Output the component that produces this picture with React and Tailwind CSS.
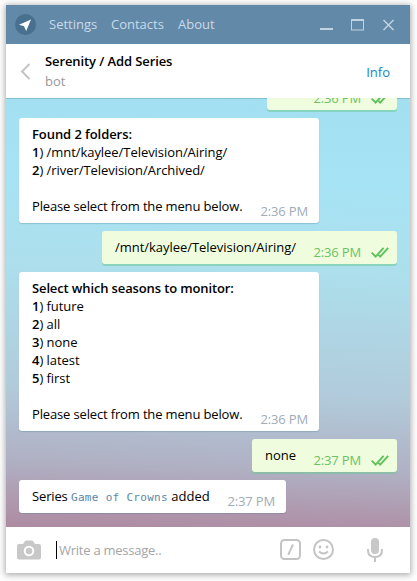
import React from 'react';

function Checks() {
  return (
    <svg width="18" height="11" viewBox="0 0 18 11" fill="none" stroke="#5fc15b" strokeWidth="1.9" className="ml-[10px] shrink-0">
      <path d="M0.6 5.6 L4.6 9.6 L12.6 0.8" />
      <path d="M7.4 7.8 L9.2 9.6 L17.2 0.8" />
    </svg>
  );
}

function Bubble({ out, time, width, children }) {
  return (
    <div
      className={
        'flex shrink-0 justify-between rounded-[3px] pt-[7px] pb-[8px] pl-[13px] text-[13px] leading-[18px] whitespace-nowrap text-black ' +
        (out
          ? 'self-end bg-[#effdde] pr-[8px] shadow-[0_2px_0_rgba(112,200,150,0.55)] '
          : 'self-start bg-white pr-[11px] shadow-[0_1px_1px_rgba(70,120,150,0.3)] ') +
        width
      }
    >
      <div>{children}</div>
      <div className={'flex h-[18px] translate-y-[5px] items-center self-end ' + (out ? 'text-[#6cc264]' : 'text-[#a0acb6]')}>
        <span className="tracking-[-0.15px]">{time}</span>
        {out && <Checks />}
      </div>
    </div>
  );
}

function Option({ n, children }) {
  return (
    <div className="tracking-[-0.05px]">
      <span className="font-semibold">{n}</span>) {children}
    </div>
  );
}

export default function App() {
  return (
    <div className="h-[581px] w-[417px] overflow-hidden bg-[#fdfdfd] pt-[5px] pl-[6px] font-['Open_Sans',sans-serif] text-[13px]">
      <div className="flex h-[568px] w-[404px] flex-col bg-white shadow-[0_1px_6px_1px_rgba(0,0,0,0.32)]">
        <div className="flex h-[39px] shrink-0 items-center bg-[#6389a8] pl-[9px] text-[#c9dae8]">
          <svg width="21" height="21" viewBox="0 0 21 21" className="shrink-0">
            <circle cx="10.5" cy="10.5" r="10.5" fill="#48708f" />
            <path d="M16 5.5 L4 10.7 L9 12.2 L11.2 17 Z" fill="#fff" />
          </svg>
          <span className="ml-[13px] w-[62px]">Settings</span>
          <span className="w-[67px]">Contacts</span>
          <span>About</span>
          <svg width="75" height="14" viewBox="0 0 75 14" fill="none" stroke="#c0d3e2" className="mr-[15px] ml-auto">
            <path d="M0 11 H13" strokeWidth="2" />
            <rect x="31.5" y="2" width="12" height="10" />
            <path d="M31 2 H44" strokeWidth="2" />
            <path d="M63.5 2 L73.5 12 M73.5 2 L63.5 12" strokeWidth="1.5" />
          </svg>
        </div>

        <div className="flex h-[54px] shrink-0 items-center bg-white pr-[20px] pl-[14px]">
          <svg width="11" height="17" viewBox="0 0 11 17" fill="none" stroke="#c4c4c4" strokeWidth="2">
            <path d="M9.5 1 L2 8.5 L9.5 16" />
          </svg>
          <div className="ml-[14px] leading-[20px]">
            <div className="font-semibold tracking-[-0.1px] text-black">Serenity / Add Series</div>
            <div className="text-[#999]">bot</div>
          </div>
          <span className="mt-[3px] ml-auto text-[#1485c2]">Info</span>
        </div>

        <div className="flex h-[429px] shrink-0 flex-col justify-end gap-[8px] overflow-hidden bg-[linear-gradient(182deg,#a2e0f1_0%,#a6e3f4_20%,#addfec_40%,#b1cbdb_68%,#b0b0c3_85%,#ae8aa1_100%)] px-[13px] pb-[14px] shadow-[inset_0_1px_0_rgba(70,130,150,0.35)]">
          <Bubble out time="2:36 PM" width="h-[33px] w-[130px]" />
          <Bubble time="2:36 PM" width="w-[300px]">
            <div className="font-semibold tracking-[-0.07px]">Found 2 folders:</div>
            <Option n="1">/mnt/kaylee/Television/Airing/</Option>
            <Option n="2">/river/Television/Archived/</Option>
            <br />
            <div className="tracking-[-0.15px]">Please select from the menu below.</div>
          </Bubble>
          <Bubble out time="2:36 PM" width="w-[295px]">
            <span className="tracking-[-0.04px]">/mnt/kaylee/Television/Airing/</span>
          </Bubble>
          <Bubble time="2:36 PM" width="w-[300px]">
            <div className="font-semibold tracking-[-0.13px]">Select which seasons to monitor:</div>
            <Option n="1">future</Option>
            <Option n="2">all</Option>
            <Option n="3">none</Option>
            <Option n="4">latest</Option>
            <Option n="5">first</Option>
            <br />
            <div className="tracking-[-0.15px]">Please select from the menu below.</div>
          </Bubble>
          <Bubble out time="2:37 PM" width="w-[145px]">none</Bubble>
          <Bubble time="2:37 PM" width="w-[267px]">
            <span className="tracking-[-0.15px]">Series</span> <span className="font-['DejaVu_Sans_Mono',monospace] text-[11px] leading-none tracking-[0.3px] text-[#5c88a8]">Game of Crowns</span> added
          </Bubble>
        </div>

        <div className="flex h-[46px] shrink-0 items-center bg-white pl-[11px]">
          <svg width="24" height="20" viewBox="0 0 24 20" className="shrink-0">
            <path d="M2 4 H6 L8 1 Q8.5 0.5 9.2 0.5 H14.8 Q15.5 0.5 16 1 L18 4 H22 Q24 4 24 6 V17.5 Q24 19.5 22 19.5 H2 Q0 19.5 0 17.5 V6 Q0 4 2 4 Z" fill="#c8c8c8" />
            <circle cx="12" cy="11" r="4.3" fill="none" stroke="#fff" strokeWidth="2" />
          </svg>
          <div className="ml-[15px] h-[18px] w-px bg-black" />
          <span className="mt-[2px] ml-[2px] tracking-[-0.25px] text-[#a5a5a5]">Write a message..</span>
          <svg width="103" height="26" viewBox="0 0 103 26" fill="none" stroke="#c4c4c4" strokeWidth="2" className="mr-[27px] ml-auto">
            <rect x="1" y="3" width="19" height="19" rx="3.5" />
            <path d="M13 7.5 L8.2 17.8" />
            <circle cx="43.5" cy="12.5" r="9.5" />
            <circle cx="40" cy="10" r="1.4" fill="#c4c4c4" stroke="none" />
            <circle cx="47" cy="10" r="1.4" fill="#c4c4c4" stroke="none" />
            <path d="M39 14.5 Q43.5 18.5 48 14.5" />
            <rect x="91" y="1" width="8" height="16" rx="4" fill="#c8c8c8" stroke="none" />
            <path d="M88 12 V13 Q88 20 95 20 Q102 20 102 13 V12 M95 20 V25" />
          </svg>
        </div>
      </div>
    </div>
  );
}
